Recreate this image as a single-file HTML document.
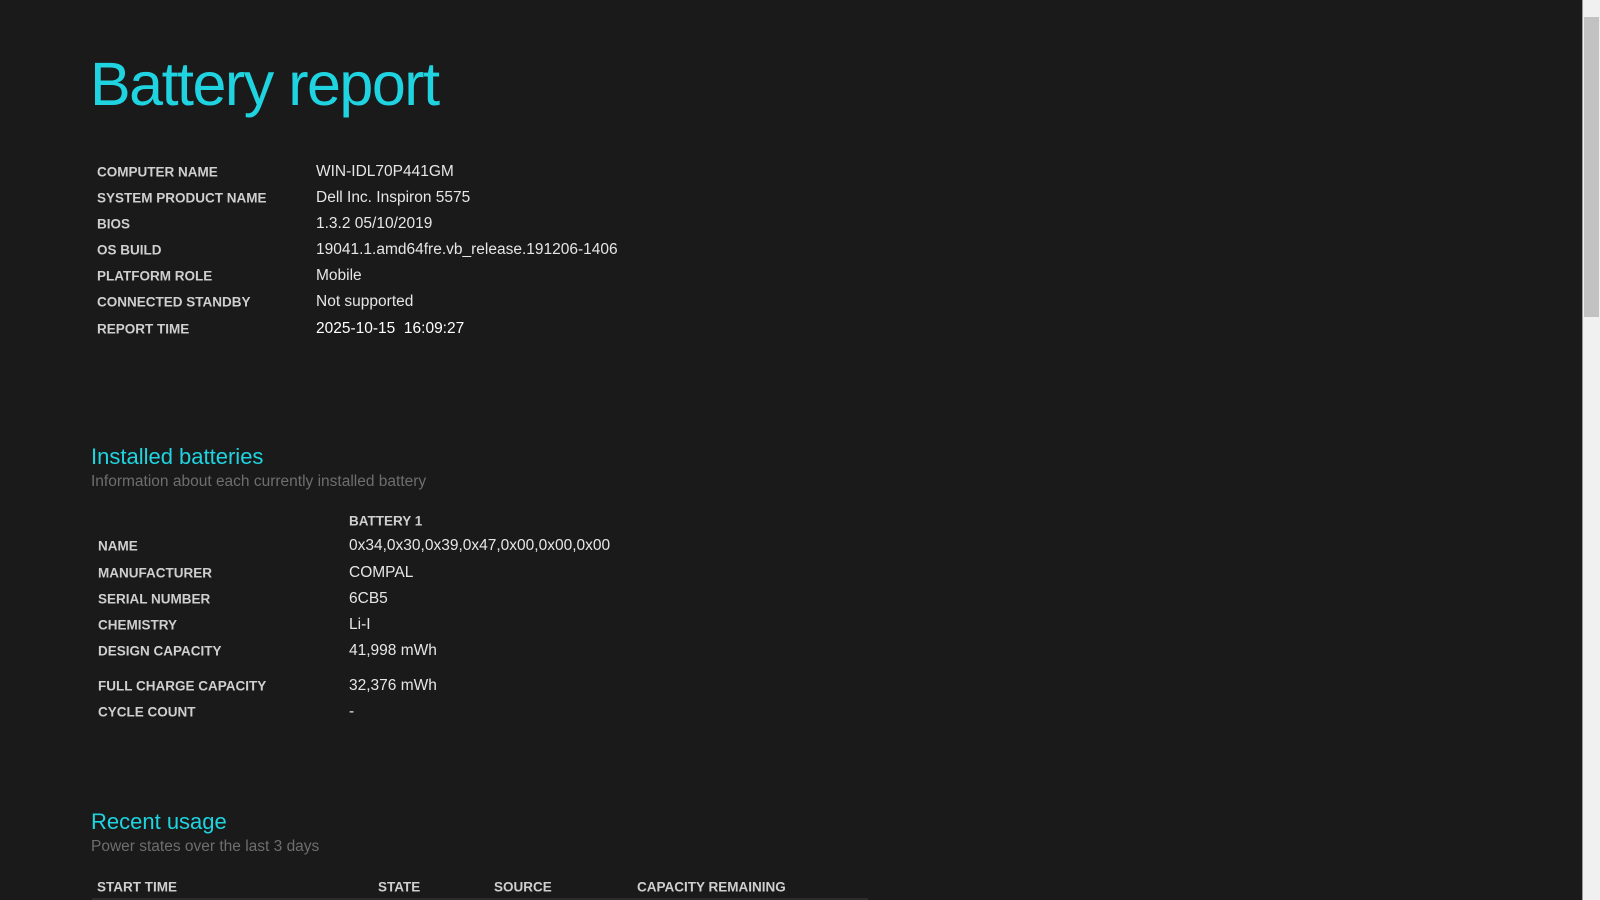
<!DOCTYPE html>
<html><head><meta charset="utf-8"><style>
html,body{margin:0;padding:0;width:1600px;height:900px;overflow:hidden;background:#1a1a1a;font-family:"Liberation Sans",sans-serif;}
.abs{position:absolute;white-space:nowrap;}
h1{position:absolute;left:90px;top:49px;margin:0;font-weight:normal;font-size:61px;color:#1fd4e0;letter-spacing:-1.5px;}
.l{position:absolute;font-size:13.5px;font-weight:bold;color:#cfcfcf;transform:translateY(-50%);white-space:nowrap;}
.v{position:absolute;font-size:15.5px;color:#e6e6e6;transform:translateY(-50%);white-space:nowrap;}
.h2{position:absolute;font-size:22px;color:#1fd4e0;transform:translateY(-50%);}
.sub{position:absolute;font-size:15.5px;color:#6e6e6e;transform:translateY(-50%);}
.sb{position:absolute;left:1582px;top:0;width:18px;height:900px;background:#f0f0f0;border-left:1px solid #9a9a9a;}
.th{position:absolute;left:1584px;top:17px;width:15px;height:300px;background:#c2c2c2;}
</style></head><body>
<h1>Battery report</h1>
<div class="l" style="left:97px;top:172px">COMPUTER NAME</div><div class="v" style="left:316px;top:172px">WIN-IDL70P441GM</div>
<div class="l" style="left:97px;top:198px">SYSTEM PRODUCT NAME</div><div class="v" style="left:316px;top:198px">Dell Inc. Inspiron 5575</div>
<div class="l" style="left:97px;top:224px">BIOS</div><div class="v" style="left:316px;top:224px">1.3.2 05/10/2019</div>
<div class="l" style="left:97px;top:250px">OS BUILD</div><div class="v" style="left:316px;top:250px">19041.1.amd64fre.vb_release.191206-1406</div>
<div class="l" style="left:97px;top:276px">PLATFORM ROLE</div><div class="v" style="left:316px;top:276px">Mobile</div>
<div class="l" style="left:97px;top:302px">CONNECTED STANDBY</div><div class="v" style="left:316px;top:302px">Not supported</div>
<div class="l" style="left:97px;top:329px">REPORT TIME</div><div class="v" style="left:316px;top:329px;color:#fff">2025-10-15&nbsp;&nbsp;16:09:27</div>

<div class="h2" style="left:91px;top:457px">Installed batteries</div>
<div class="sub" style="left:91px;top:482px">Information about each currently installed battery</div>
<div class="l" style="left:349px;top:521px">BATTERY 1</div>
<div class="l" style="left:98px;top:546px">NAME</div><div class="v" style="left:349px;top:546px">0x34,0x30,0x39,0x47,0x00,0x00,0x00</div>
<div class="l" style="left:98px;top:573px">MANUFACTURER</div><div class="v" style="left:349px;top:573px">COMPAL</div>
<div class="l" style="left:98px;top:599px">SERIAL NUMBER</div><div class="v" style="left:349px;top:599px">6CB5</div>
<div class="l" style="left:98px;top:625px">CHEMISTRY</div><div class="v" style="left:349px;top:625px">Li-I</div>
<div class="l" style="left:98px;top:651px">DESIGN CAPACITY</div><div class="v" style="left:349px;top:651px">41,998 mWh</div>
<div class="l" style="left:98px;top:686px">FULL CHARGE CAPACITY</div><div class="v" style="left:349px;top:686px">32,376 mWh</div>
<div class="l" style="left:98px;top:712px">CYCLE COUNT</div><div class="v" style="left:349px;top:712px">-</div>

<div class="h2" style="left:91px;top:822px">Recent usage</div>
<div class="sub" style="left:91px;top:847px">Power states over the last 3 days</div>
<div class="l" style="left:97px;top:887px">START TIME</div>
<div class="l" style="left:378px;top:887px">STATE</div>
<div class="l" style="left:494px;top:887px">SOURCE</div>
<div class="l" style="left:637px;top:887px">CAPACITY REMAINING</div>
<div class="abs" style="left:92px;top:898px;width:776px;height:2px;background:#2c2c2c"></div>

<div class="sb"></div><div class="th"></div>
</body></html>
